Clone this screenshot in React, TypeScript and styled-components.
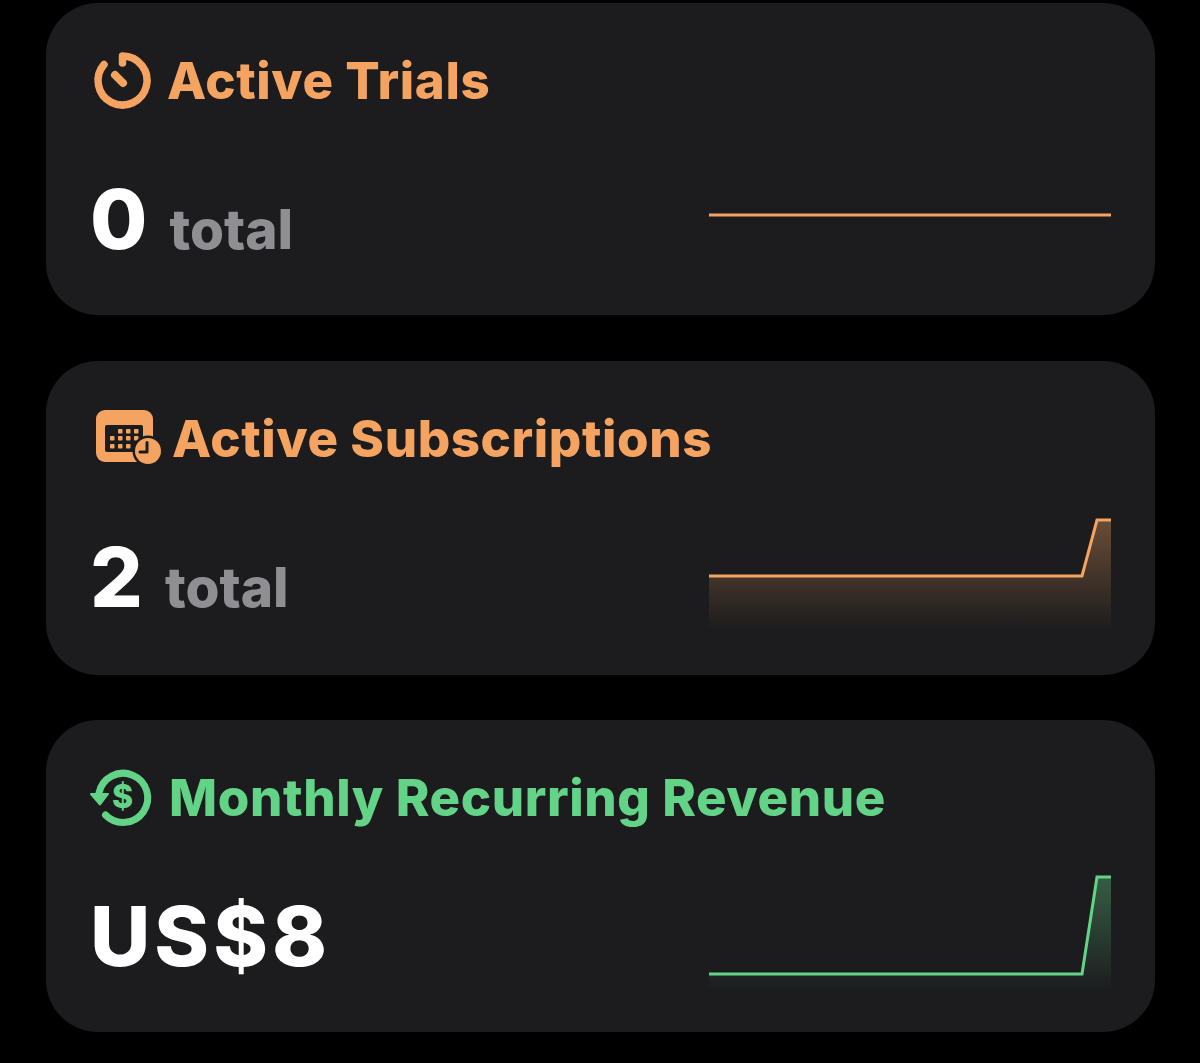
import React from 'react';
import styled, { createGlobalStyle } from 'styled-components';

const ORANGE = '#f4a460';
const GREEN = '#62d387';
const CARD = '#1c1c1e';

const GlobalStyle = createGlobalStyle`
  html, body {
    margin: 0;
    background: #000;
  }
  body {
    font-family: Inter, "Liberation Sans", sans-serif;
  }
`;

const Page = styled.div`
  width: 1200px;
  height: 1063px;
  box-sizing: border-box;
  padding: 3px 45px 0 46px;
  display: flex;
  flex-direction: column;
  gap: 45.5px;
  overflow: hidden;
`;

const Card = styled.section<{ $height: number }>`
  height: ${(p) => p.$height}px;
  flex: none;
  box-sizing: border-box;
  background: ${CARD};
  border-radius: 52px;
  padding: 48px 44px 0 46px;
  display: flex;
  flex-direction: column;
`;

const Header = styled.div<{ $color: string; $gap: number }>`
  display: flex;
  align-items: center;
  gap: ${(p) => p.$gap}px;
  height: 60px;
  color: ${(p) => p.$color};
`;

const Icon = styled.svg`
  display: block;
  flex: none;
  overflow: visible;
`;

const Title = styled.h2`
  margin: 0;
  font-size: 51px;
  font-weight: 800;
  line-height: 60px;
  letter-spacing: 0.6px;
`;

const Body = styled.div`
  display: flex;
  justify-content: space-between;
  align-items: flex-start;
  margin-top: 43px;
`;

const Stat = styled.div`
  display: flex;
  align-items: baseline;
  gap: 22px;
  height: 100px;
  margin: 15px 0 0 -2px;
`;

const Value = styled.span<{ $spacing?: number }>`
  color: #fff;
  font-size: 83px;
  font-weight: 800;
  line-height: 100px;
  letter-spacing: ${(p) => p.$spacing ?? 0}px;
`;

const Unit = styled.span`
  color: #8e8e93;
  font-size: 55px;
  font-weight: 800;
`;

const Chart = styled.svg`
  display: block;
  flex: none;
`;

const TimerIcon = () => (
  <Icon width="60" height="60" viewBox="0 0 60 60" fill="none">
    <path
      d="M12 13.5 A 24.5 24.5 0 1 0 30.5 5 L 30.5 12"
      stroke="currentColor"
      strokeWidth="7.5"
      strokeLinecap="round"
      strokeLinejoin="round"
    />
    <path d="M23 24 L 31 32" stroke="currentColor" strokeWidth="8" strokeLinecap="round" />
  </Icon>
);

const CalendarIcon = () => (
  <Icon width="71" height="60" viewBox="0 0 71 60" fill="none">
    <rect x="4" y="1" width="57" height="52" rx="9" fill="currentColor" />
    <rect x="13" y="16" width="38" height="27" rx="2" fill={CARD} />
    <g fill="currentColor">
      <rect x="26" y="20" width="4.5" height="4.5" rx="0.8" />
      <rect x="34" y="20" width="4.5" height="4.5" rx="0.8" />
      <rect x="42" y="20" width="4.5" height="4.5" rx="0.8" />
      <rect x="18" y="27" width="4.5" height="4.5" rx="0.8" />
      <rect x="26" y="27" width="4.5" height="4.5" rx="0.8" />
      <rect x="34" y="27" width="4.5" height="4.5" rx="0.8" />
      <rect x="42" y="27" width="4.5" height="4.5" rx="0.8" />
      <rect x="18" y="35" width="4.5" height="4.5" rx="0.8" />
      <rect x="26" y="35" width="4.5" height="4.5" rx="0.8" />
      <rect x="34" y="35" width="4.5" height="4.5" rx="0.8" />
    </g>
    <circle cx="56" cy="42" r="15.5" fill={CARD} />
    <circle cx="56" cy="42" r="13" fill="currentColor" />
    <path d="M55 33.5 V 43 H 48" stroke={CARD} strokeWidth="3" strokeLinecap="round" strokeLinejoin="round" />
  </Icon>
);

const RevenueIcon = () => (
  <Icon width="62" height="60" viewBox="0 0 62 60" fill="none">
    <path
      d="M7 25 A 24.6 24.6 0 1 1 13.5 47"
      stroke="currentColor"
      strokeWidth="7"
      strokeLinecap="round"
    />
    <path
      d="M-1 26 L 16 26 L 8 36.5 Z"
      fill="currentColor"
      stroke="currentColor"
      strokeWidth="2"
      strokeLinejoin="round"
    />
    <text
      x="30.5"
      y="40"
      textAnchor="middle"
      fontFamily="Inter, sans-serif"
      fontSize="32"
      fontWeight="800"
      fill="currentColor"
    >
      $
    </text>
  </Icon>
);

interface IChartProps {
  id: string;
  color: string;
  baseline: number;
  peak: number;
  fillBottom: number;
  fillOpacity: number;
}

const Spark: React.FC<IChartProps> = ({ id, color, baseline, peak, fillBottom, fillOpacity }) => {
  const line = `M0 ${baseline} H373 L388 ${peak} H402`;
  return (
    <Chart width="402" height="120" viewBox="0 0 402 120">
      <defs>
        <linearGradient id={id} x1="0" y1="0" x2="0" y2="1">
          <stop offset="0" stopColor={color} stopOpacity={fillOpacity} />
          <stop offset="1" stopColor={color} stopOpacity="0" />
        </linearGradient>
      </defs>
      {peak < baseline && <path d={`${line} V${fillBottom} H0 Z`} fill={`url(#${id})`} />}
      <path d={line} stroke={color} strokeWidth="3" fill="none" />
    </Chart>
  );
};

export default function App() {
  return (
    <Page>
      <GlobalStyle />
      <Card $height={312}>
        <Header $color={ORANGE} $gap={15}>
          <TimerIcon />
          <Title>Active Trials</Title>
        </Header>
        <Body>
          <Stat>
            <Value>0</Value>
            <Unit>total</Unit>
          </Stat>
          <Spark id="trials" color={ORANGE} baseline={61} peak={61} fillBottom={120} fillOpacity={0} />
        </Body>
      </Card>
      <Card $height={314}>
        <Header $color={ORANGE} $gap={9}>
          <CalendarIcon />
          <Title>Active Subscriptions</Title>
        </Header>
        <Body>
          <Stat>
            <Value>2</Value>
            <Unit>total</Unit>
          </Stat>
          <Spark id="subs" color={ORANGE} baseline={64} peak={8} fillBottom={118} fillOpacity={0.36} />
        </Body>
      </Card>
      <Card $height={312}>
        <Header $color={GREEN} $gap={15}>
          <RevenueIcon />
          <Title>Monthly Recurring Revenue</Title>
        </Header>
        <Body>
          <Stat>
            <Value $spacing={4}>US$8</Value>
          </Stat>
          <Spark id="mrr" color={GREEN} baseline={103} peak={6} fillBottom={120} fillOpacity={0.36} />
        </Body>
      </Card>
    </Page>
  );
}
